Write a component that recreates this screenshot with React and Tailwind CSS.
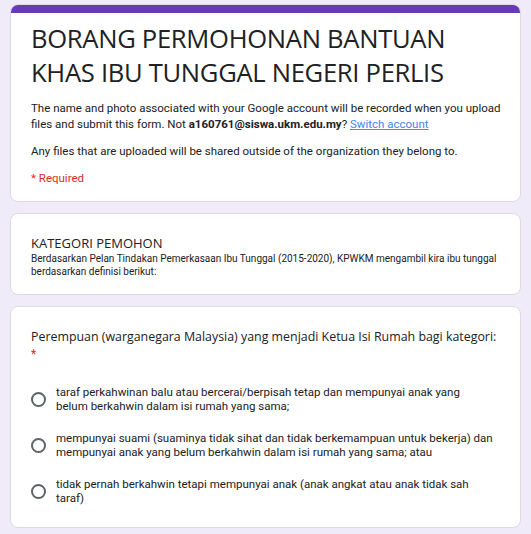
const OPTIONS = [
  ['taraf perkahwinan balu atau bercerai/berpisah tetap dan mempunyai anak yang', 'belum berkahwin dalam isi rumah yang sama;'],
  ['mempunyai suami (suaminya tidak sihat dan tidak berkemampuan untuk bekerja) dan', 'mempunyai anak yang belum berkahwin dalam isi rumah yang sama; atau'],
  ['tidak pernah berkahwin tetapi mempunyai anak (anak angkat atau anak tidak sah', 'taraf)'],
];

const heading = { fontFamily: '"Open Sans", "Liberation Sans", sans-serif' };

function Radio() {
  return (
    <span className="block w-[15px] h-[15px] shrink-0 rounded-full border-2 border-[#5f6368]" />
  );
}

export default function App() {
  return (
    <div
      className="min-h-screen bg-[#f0ebf8] pt-[4px] pl-[10px] pr-[10px] pb-4 text-[#202124]"
      style={{ fontFamily: 'Roboto, "Liberation Sans", sans-serif' }}
    >
      <div className="flex flex-col gap-[11px]">
        {/* header card */}
        <div className="bg-white rounded-lg border border-[#dadce0] overflow-hidden">
          <div className="h-[8px] bg-[#673ab7]" />
          <div className="px-[20px] pt-[9px] pb-[15px]">
            <h1 className="text-[25.6px] leading-[34px] tracking-[-0.3px]" style={heading}>
              BORANG PERMOHONAN BANTUAN<br />KHAS IBU TUNGGAL NEGERI PERLIS
            </h1>
            <p className="mt-[10px] text-[11.5px] leading-[16px] whitespace-nowrap">
              The name and photo associated with your Google account will be recorded when you upload<br />
              files and submit this form. Not <span className="font-bold">a160761@siswa.ukm.edu.my</span>?{' '}
              <a className="text-[#4285f4] underline">Switch account</a>
            </p>
            <p className="mt-[11px] text-[11.5px] leading-[16px]">
              Any files that are uploaded will be shared outside of the organization they belong to.
            </p>
            <p className="mt-[11px] text-[11.5px] leading-[16px] text-[#d93025]">* Required</p>
          </div>
        </div>

        {/* section card */}
        <div className="bg-white rounded-lg border border-[#dadce0] px-[20px] pt-[20px] pb-[16px]">
          <h2 className="text-[13px] leading-[18px] font-medium" style={heading}>KATEGORI PEMOHON</h2>
          <p className="text-[10px] leading-[13px] whitespace-nowrap">
            Berdasarkan Pelan Tindakan Pemerkasaan Ibu Tunggal (2015-2020), KPWKM mengambil kira ibu tunggal<br />
            berdasarkan definisi berikut:
          </p>
        </div>

        {/* question card */}
        <div className="bg-white rounded-lg border border-[#dadce0] px-[20px] pt-[20px] pb-[22px]">
          <div className="text-[12.4px] leading-[20px] whitespace-nowrap" style={heading}>
            Perempuan (warganegara Malaysia) yang menjadi Ketua Isi Rumah bagi kategori:
          </div>
          <div className="text-[#d93025] text-[12px] leading-[14px]">*</div>
          <div className="mt-[24px] flex flex-col gap-[18px]">
            {OPTIONS.map(lines => (
              <label key={lines[0]} className="flex items-center gap-[10px] pl-[0px]">
                <Radio />
                <span className="text-[11.5px] leading-[14px] whitespace-nowrap">
                  {lines[0]}<br />{lines[1]}
                </span>
              </label>
            ))}
          </div>
        </div>
      </div>
    </div>
  );
}
